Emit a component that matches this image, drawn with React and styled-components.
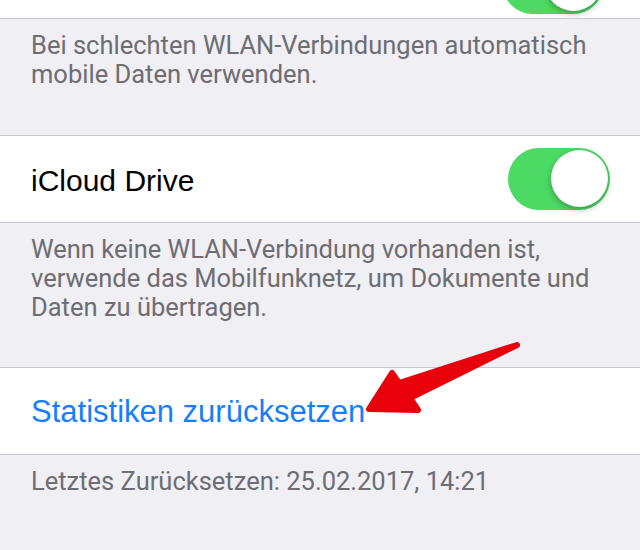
import styled, { createGlobalStyle } from "styled-components";

const GlobalStyle = createGlobalStyle`
  html, body {
    margin: 0;
    padding: 0;
    background: #efeff4;
  }
`;

export default function App() {
  return (
    <>
      <GlobalStyle />
      <Page>
        <Cell $height={19} $top={false} $align="flex-end">
          <Toggle $cut />
        </Cell>
        <Footer $height={116}>
          Bei schlechten WLAN-Verbindungen automatisch
          <br />
          mobile Daten verwenden.
        </Footer>
        <Cell $height={88}>
          <Label>iCloud Drive</Label>
          <Toggle />
        </Cell>
        <Footer $height={144}>
          Wenn keine WLAN-Verbindung vorhanden ist,
          <br />
          verwende das Mobilfunknetz, um Dokumente und
          <br />
          Daten zu übertragen.
        </Footer>
        <Cell $height={88}>
          <Link>Statistiken zurücksetzen</Link>
        </Cell>
        <Footer $height={100}>
          Letztes Zurücksetzen: 25.02.2017, 14:21
        </Footer>
        <Arrow viewBox="0 0 640 550" aria-hidden="true">
          <path
            d="M369 409 L392 373 L399 383 L517 345 L410 398 L418 410 Z"
            fill="#e8000b"
            stroke="#e8000b"
            strokeWidth="6"
            strokeLinejoin="round"
          />
        </Arrow>
      </Page>
    </>
  );
}

const Page = styled.div`
  position: relative;
  width: 640px;
  height: 550px;
  overflow: hidden;
  background: #efeff4;
`;

const Cell = styled.div`
  height: ${(p) => p.$height}px;
  box-sizing: border-box;
  background: #ffffff;
  border-bottom: 1px solid #c8c7cc;
  border-top: ${(p) => (p.$top === false ? "none" : "1px solid #c8c7cc")};
  display: flex;
  align-items: ${(p) => p.$align || "center"};
  justify-content: space-between;
  padding: 0 30px 0 31px;
  overflow: hidden;
`;

const Footer = styled.div`
  height: ${(p) => p.$height}px;
  box-sizing: border-box;
  padding: 12px 20px 0 31px;
  font-family: "Roboto", "Liberation Sans", sans-serif;
  font-size: 25.5px;
  line-height: 29px;
  color: #6d6d72;
  white-space: nowrap;
`;

const Label = styled.span`
  font-family: "Liberation Sans", sans-serif;
  font-size: 30px;
  color: #000000;
  padding-top: 4px;
`;

const Link = styled.span`
  font-family: "Liberation Sans", sans-serif;
  font-size: 31px;
  color: #157efb;
  padding-top: 2px;
`;

const Toggle = styled.div`
  position: relative;
  flex: none;
  width: 102px;
  height: 62px;
  border-radius: 31px;
  background: #4cd964;
  margin-left: auto;
  margin-bottom: ${(p) => (p.$cut ? "4px" : "0")};
  margin-right: ${(p) => (p.$cut ? "6px" : "0")};

  &::after {
    content: "";
    position: absolute;
    top: 2px;
    right: 2px;
    width: 57px;
    height: 57px;
    border-radius: 50%;
    background: #ffffff;
    box-shadow: 0 3px 6px rgba(0, 0, 0, 0.25), 0 0 1px rgba(0, 0, 0, 0.2);
  }
`;

const Arrow = styled.svg`
  position: absolute;
  left: 0;
  top: 0;
  width: 640px;
  height: 550px;
  pointer-events: none;
`;
